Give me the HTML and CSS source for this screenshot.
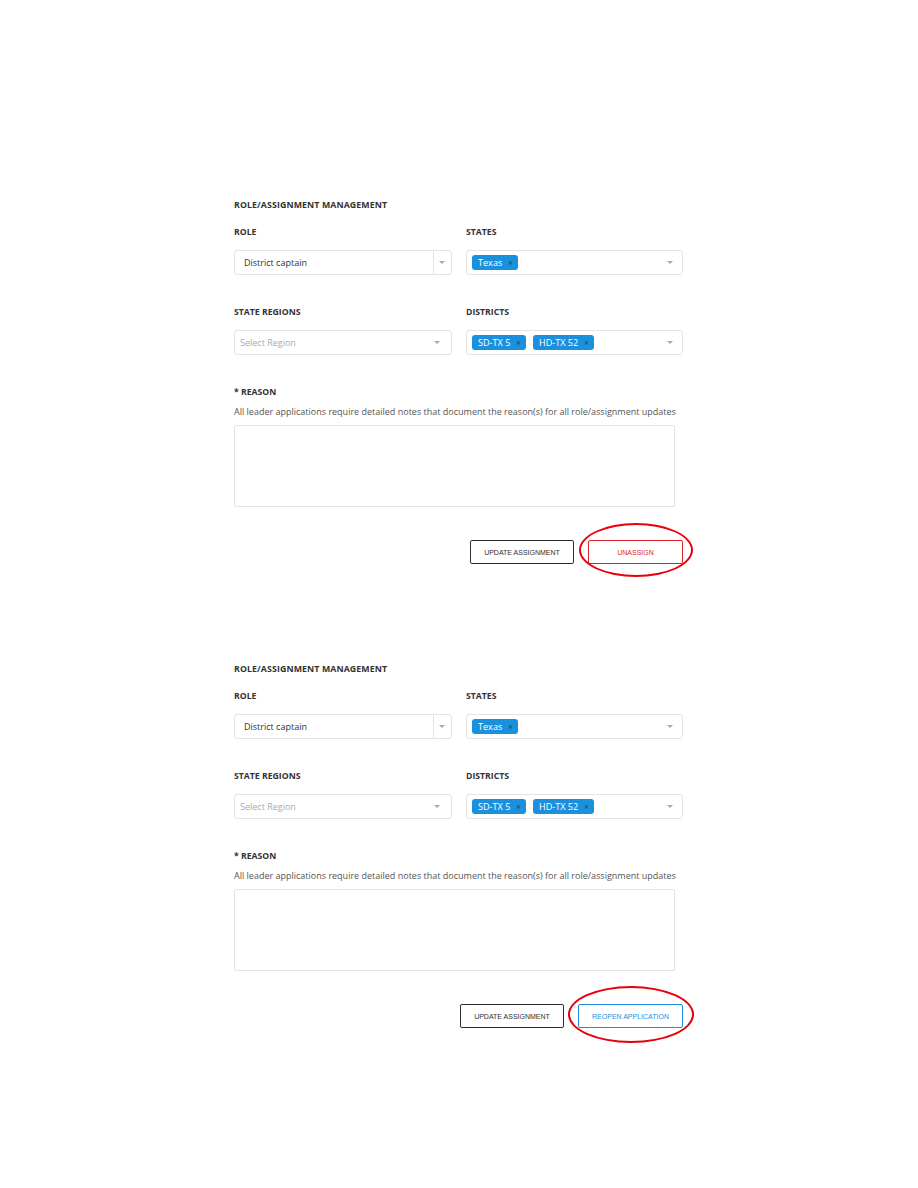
FILE: index.html
```html
<!DOCTYPE html>
<html>
<head>
<meta charset="utf-8">
<link rel="stylesheet" href="styles.css">
</head>
<body>
<div class="page">
  <section class="panel">
    <h2 class="title">ROLE/ASSIGNMENT MANAGEMENT</h2>
    <div class="grid">
      <div class="field">
        <div class="label">ROLE</div>
        <div class="box role">
          <span class="value">District captain</span>
          <span class="divider"></span>
          <span class="arrow"></span>
        </div>
      </div>
      <div class="field">
        <div class="label">STATES</div>
        <div class="box multi">
          <span class="tag">Texas <span class="x">×</span></span>
          <span class="arrow"></span>
        </div>
      </div>
      <div class="field row2">
        <div class="label">STATE REGIONS</div>
        <div class="box placeholder-box">
          <span class="placeholder">Select Region</span>
          <span class="arrow"></span>
        </div>
      </div>
      <div class="field row2">
        <div class="label">DISTRICTS</div>
        <div class="box multi">
          <span class="tag">SD-TX 5 <span class="x">×</span></span>
          <span class="tag">HD-TX 52 <span class="x">×</span></span>
          <span class="arrow"></span>
        </div>
      </div>
    </div>
    <div class="label reason-label">* REASON</div>
    <p class="help">All leader applications require detailed notes that document the reason(s) for all role/assignment updates</p>
    <div class="textarea"></div>
    <div class="actions">
      <button class="btn btn-dark w104">UPDATE ASSIGNMENT</button>
      <div class="circled">
        <button class="btn btn-red w95">UNASSIGN</button>
        <span class="ring ring1"></span>
      </div>
    </div>
  </section>

  <section class="panel panel2">
    <h2 class="title">ROLE/ASSIGNMENT MANAGEMENT</h2>
    <div class="grid">
      <div class="field">
        <div class="label">ROLE</div>
        <div class="box role">
          <span class="value">District captain</span>
          <span class="divider"></span>
          <span class="arrow"></span>
        </div>
      </div>
      <div class="field">
        <div class="label">STATES</div>
        <div class="box multi">
          <span class="tag">Texas <span class="x">×</span></span>
          <span class="arrow"></span>
        </div>
      </div>
      <div class="field row2">
        <div class="label">STATE REGIONS</div>
        <div class="box placeholder-box">
          <span class="placeholder">Select Region</span>
          <span class="arrow"></span>
        </div>
      </div>
      <div class="field row2">
        <div class="label">DISTRICTS</div>
        <div class="box multi">
          <span class="tag">SD-TX 5 <span class="x">×</span></span>
          <span class="tag">HD-TX 52 <span class="x">×</span></span>
          <span class="arrow"></span>
        </div>
      </div>
    </div>
    <div class="label reason-label">* REASON</div>
    <p class="help">All leader applications require detailed notes that document the reason(s) for all role/assignment updates</p>
    <div class="textarea"></div>
    <div class="actions">
      <button class="btn btn-dark w104">UPDATE ASSIGNMENT</button>
      <div class="circled">
        <button class="btn btn-blue w105">REOPEN APPLICATION</button>
        <span class="ring ring2"></span>
      </div>
    </div>
  </section>
</div>
</body>
</html>
```

FILE: styles.css
```css
* { box-sizing: border-box; }
html, body { margin: 0; padding: 0; background: #fff; }
body {
  font-family: "Open Sans", "Noto Sans", sans-serif;
  color: #333;
}
.page {
  padding-top: 181px;
}
.panel {
  margin-left: 215px;
  width: 488px;
  padding: 18px 20px 19px 19px;
  position: relative;
}
.panel2 { margin-top: 62px; }
.title {
  margin: 0;
  font-size: 8.8px;
  line-height: 12px;
  font-weight: 700;
  color: #333;
  letter-spacing: 0.1px;
}
.grid {
  display: grid;
  grid-template-columns: 218px 217px;
  column-gap: 14px;
  row-gap: 31px;
  margin-top: 15px;
}
.label {
  font-size: 8.7px;
  line-height: 12px;
  font-weight: 700;
  color: #333;
  margin-bottom: 12px;
}
.box {
  height: 25px;
  border: 1px solid #e4e4e4;
  border-radius: 3px;
  display: flex;
  align-items: center;
  position: relative;
  background: #fff;
}
.role .value {
  font-size: 9px;
  color: #333;
  padding-left: 9px;
  flex: 1;
}
.role .divider {
  width: 1px;
  align-self: stretch;
  background: #e4e4e4;
}
.role .arrow { margin: 0 6px 0 5px; }
.arrow {
  width: 0;
  height: 0;
  border-left: 3px solid transparent;
  border-right: 3px solid transparent;
  border-top: 3px solid #a9a9a9;
}
.multi { padding-left: 5px; gap: 7px; }
.multi .arrow { margin-left: auto; margin-right: 9px; }
.placeholder-box { padding-left: 5px; }
.placeholder {
  font-size: 9px;
  color: #aaa;
  flex: 1;
}
.placeholder-box .arrow { margin-right: 11px; }
.tag {
  display: inline-flex;
  align-items: center;
  height: 15px;
  padding: 0 5px 0 6px;
  border-radius: 3px;
  background: #1b90dc;
  color: #fff;
  font-size: 9.1px;
  white-space: nowrap;
}
.tag .x {
  color: #1f5b6e;
  font-size: 8px;
  font-weight: 700;
  margin-left: 6px;
}
.reason-label {
  margin-top: 31px;
  margin-bottom: 8px;
}
.help {
  margin: 0;
  font-size: 9px;
  line-height: 12px;
  color: #555;
  white-space: nowrap;
}
.textarea {
  margin-top: 7px;
  width: 441px;
  height: 82px;
  border: 1px solid #e2e2e2;
  border-radius: 2px;
}
.actions {
  display: flex;
  justify-content: flex-end;
  gap: 14px;
  margin-top: 33px;
}
.btn {
  height: 24px;
  background: #fff;
  font-family: "Liberation Sans", Arial, sans-serif;
  font-size: 7px;
  padding: 0;
  border-radius: 2px;
  cursor: pointer;
}
.w104 { width: 104px; }
.w95 { width: 95px; }
.w105 { width: 105px; }
.btn-dark { border: 1px solid #2b2f36; color: #2b2f36; }
.btn-red { border: 1px solid #e0242c; color: #e0242c; }
.btn-blue { border: 1px solid #1b90dc; color: #1b90dc; }
.circled { position: relative; display: flex; }
.ring {
  position: absolute;
  border: 2px solid #e8000b;
  border-radius: 50%;
  pointer-events: none;
}
.ring1 { left: -9px; top: -17px; width: 114px; height: 54px; }
.ring2 { left: -10px; top: -18px; width: 126px; height: 57px; }
```
